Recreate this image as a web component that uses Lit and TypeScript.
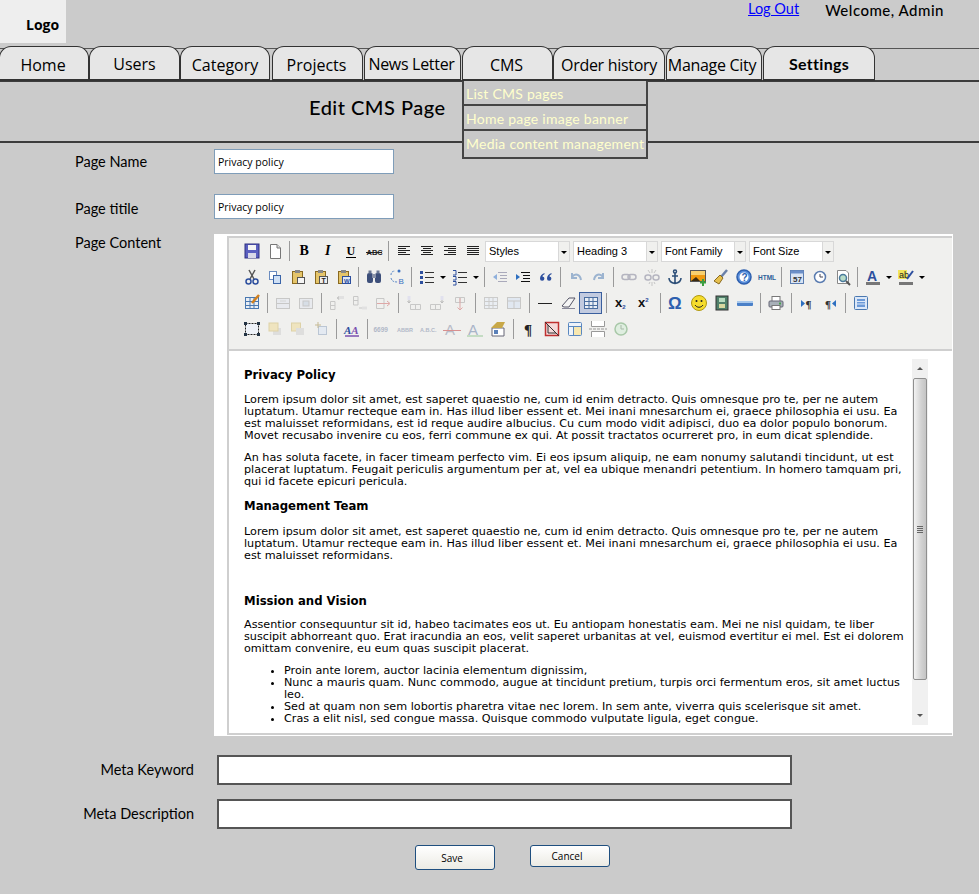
import { LitElement, html, css, svg, TemplateResult } from 'lit';
import { customElement } from 'lit/decorators.js';

const TABS = [
  { label: 'Home', width: 90, gap: 0, nudge: 2 },
  { label: 'Users', width: 91, gap: 0, raised: true },
  { label: 'Category', width: 90, gap: 2 },
  { label: 'Projects', width: 91, gap: 1, nudge: 2 },
  { label: 'News Letter', width: 97, gap: 1, raised: true, nudge: 2 },
  { label: 'CMS', width: 91, gap: 0, nudge: 2 },
  { label: 'Order history', width: 112, gap: 1 },
  { label: 'Manage City', width: 96, gap: 1, nudge: 4 },
  { label: 'Settings', width: 112, gap: 0 },
];

const CMS_MENU = ['List CMS pages', 'Home page image banner', 'Media content management'];

const t = (x: number, s: string, size = 10, fill = '#222', extra = '') =>
  svg`<text x=${x} y="14" font-size=${size} fill=${fill} font-family="Liberation Sans, sans-serif" style=${extra}>${s}</text>`;

const lines = (c: string, rows: number[][]) =>
  rows.map(([x1, y, x2]) => svg`<path d="M${x1} ${y}H${x2}" stroke=${c} />`);

const tableGrid = (c: string) => svg`<rect x="3.5" y="4.5" width="13" height="11" fill="#e8eef5" stroke=${c} /><path d="M3 8.5H17M3 12.5H17M8 5V15M12 5V15" stroke=${c} />`;
const clip = svg`<rect x="4.5" y="4.5" width="10" height="12" fill="#e5c56a" stroke="#8a6a20" /><rect x="7" y="3" width="5" height="3" fill="#888" />`;

// toolbar glyphs, all on a 20x20 box
const ICONS: Record<string, TemplateResult> = {
  save: svg`<rect x="3" y="3" width="14" height="14" fill="#5a5fc0" stroke="#2e3180" /><rect x="6" y="4" width="8" height="5" fill="#f4f4f4" /><rect x="6" y="12" width="8" height="5" fill="#d8d8e8" />`,
  doc: svg`<path d="M5.5 3.5H12L15.5 7V17.5H5.5Z" fill="#fff" stroke="#777" /><path d="M12 3.5V7H15.5" fill="#ddd" stroke="#777" />`,
  bold: t(4.5, 'B', 14, '#000', 'font-weight:700;font-family:Liberation Serif,serif'),
  italic: t(7, 'I', 14, '#000', 'font-weight:700;font-style:italic;font-family:Liberation Serif,serif'),
  underline: svg`${t(5.5, 'U', 12, '#000', 'font-weight:700;font-family:Liberation Serif,serif')}<path d="M5 16.5H15" stroke="#000" />`,
  strike: svg`${t(2.5, 'ABC', 7.5, '#222', 'font-weight:700')}<path d="M2 11.5H18" stroke="#222" />`,
  left: svg`${lines('#222', [[4, 5.5, 16], [4, 7.5, 12], [4, 9.5, 16], [4, 11.5, 12], [4, 13.5, 16]])}`,
  center: svg`${lines('#222', [[4, 5.5, 16], [6, 7.5, 14], [4, 9.5, 16], [6, 11.5, 14], [4, 13.5, 16]])}`,
  right: svg`${lines('#222', [[4, 5.5, 16], [8, 7.5, 16], [4, 9.5, 16], [8, 11.5, 16], [4, 13.5, 16]])}`,
  justify: svg`${lines('#222', [[4, 5.5, 16], [4, 7.5, 16], [4, 9.5, 16], [4, 11.5, 16], [4, 13.5, 16]])}`,
  cut: svg`<path d="M7 3L12 12M13 3L8 12" stroke="#555" stroke-width="1.5" /><circle cx="6.5" cy="14.5" r="2.5" fill="none" stroke="#2d4f9e" stroke-width="1.5" /><circle cx="13.5" cy="14.5" r="2.5" fill="none" stroke="#2d4f9e" stroke-width="1.5" />`,
  copy: svg`<rect x="4.5" y="4.5" width="7" height="8" fill="#fff" stroke="#6a8cc0" /><rect x="8.5" y="8.5" width="7" height="8" fill="#cfe0f5" stroke="#3a64a8" />`,
  paste: svg`${clip}<rect x="9.5" y="10.5" width="7" height="6" fill="#f5f5f5" stroke="#555" />`,
  pasteText: svg`${clip}<rect x="8.5" y="9.5" width="8" height="7" fill="#eee" stroke="#555" /><text x="10.5" y="15.5" font-size="7" font-weight="700" fill="#222" font-family="Liberation Sans, sans-serif">T</text>`,
  pasteWord: svg`${clip}<rect x="8.5" y="9.5" width="8" height="7" fill="#dfe8f5" stroke="#2d4f9e" /><text x="10" y="15.5" font-size="6" font-weight="700" fill="#2d4f9e" font-family="Liberation Sans, sans-serif">W</text>`,
  find: svg`<rect x="3" y="6" width="6" height="10" rx="2" fill="#3d4f7a" /><rect x="11" y="6" width="6" height="10" rx="2" fill="#3d4f7a" /><rect x="8" y="7" width="4" height="4" fill="#8a93a8" /><rect x="4.5" y="3.5" width="3" height="3" fill="#6b7894" /><rect x="12.5" y="3.5" width="3" height="3" fill="#6b7894" />`,
  replace: svg`<path d="M4 8C4 5 6 4 8 4M4 11C5 15 8 15 11 15" fill="none" stroke="#5a88c8" stroke-dasharray="2 1" /><text x="11.5" y="17" font-size="8" fill="#3a70c0" font-family="Liberation Sans, sans-serif">B</text><circle cx="12" cy="4" r="1.5" fill="#3a70c0" />`,
  bullist: svg`<rect x="3" y="4" width="3" height="3" fill="#2d4f9e" /><rect x="3" y="9" width="3" height="3" fill="#2d4f9e" /><rect x="3" y="14" width="3" height="3" fill="#2d4f9e" /><path d="M8 5.5H17M8 10.5H17M8 15.5H17" stroke="#333" />`,
  numlist: svg`<path d="M3 3.5H6V8H3M3 9.5H6V13H3M3 14.5H6V18H3" fill="none" stroke="#2d4f9e" /><path d="M8 5.5H17M8 10.5H17M8 15.5H17" stroke="#333" />`,
  outdent: svg`<path d="M8 5.5H17M10 8.5H17M10 11.5H17M8 14.5H17" stroke="#aab" /><path d="M3 10L7 7V13Z" fill="#8fb0dc" />`,
  indent: svg`<path d="M8 5.5H17M10 8.5H17M10 11.5H17M8 14.5H17" stroke="#111" /><path d="M7 10L3 7V13Z" fill="#2d6fc0" />`,
  quote: svg`<path d="M8.5 6C5.5 7 4 9 4 11.5A2.2 2.2 0 1 0 6.5 9.4C6.5 8.4 7.2 7.7 8.5 7.2ZM15.5 6C12.5 7 11 9 11 11.5A2.2 2.2 0 1 0 13.5 9.4C13.5 8.4 14.2 7.7 15.5 7.2Z" fill="#2d4f9e" />`,
  undo: svg`<path d="M6 6V11H11M6 10C9 6 14 7 15 13" fill="none" stroke="#9cb4d0" stroke-width="2" />`,
  redo: svg`<path d="M14 6V11H9M14 10C11 6 6 7 5 13" fill="none" stroke="#9cb4d0" stroke-width="2" />`,
  link: svg`<rect x="3" y="7.5" width="8" height="5" rx="2.5" fill="none" stroke="#b5b5c0" stroke-width="1.5" /><rect x="9" y="7.5" width="8" height="5" rx="2.5" fill="none" stroke="#b5b5c0" stroke-width="1.5" />`,
  unlink: svg`<rect x="3" y="8" width="6" height="5" rx="2.5" fill="none" stroke="#b5b5c0" stroke-width="1.5" /><rect x="11" y="8" width="6" height="5" rx="2.5" fill="none" stroke="#b5b5c0" stroke-width="1.5" /><path d="M10 2V6M6 3L8 6M14 3L12 6M10 15V19M7 17L8 15M13 17L12 15" stroke="#c5c5c5" />`,
  anchor: svg`<circle cx="10" cy="4.5" r="1.5" fill="none" stroke="#2d4f78" stroke-width="1.5" /><path d="M10 6V16M7 9H13M4 11C4 15 7 16 10 16.5C13 16 16 15 16 11" fill="none" stroke="#2d4f78" stroke-width="1.6" />`,
  image: svg`<rect x="2.5" y="3.5" width="15" height="11" fill="#f09a10" stroke="#555" /><rect x="3" y="4" width="14" height="4" fill="#f7d070" /><path d="M3 14L8 10L12 14Z" fill="#3a2a10" /><path d="M15 12V19M12 15.5H18" stroke="#3ca040" stroke-width="2" />`,
  cleanup: svg`<path d="M16 3L10 10" stroke="#6a80a8" stroke-width="2.5" /><path d="M9 8L12 11L8 17L3 14Z" fill="#e6c04e" stroke="#8a6a20" />`,
  help: svg`<circle cx="10" cy="10" r="7" fill="#5a8fdc" stroke="#2d5fae" stroke-width="1.5" /><circle cx="10" cy="10" r="4.5" fill="#fff" /><text x="7.5" y="13.5" font-size="10" font-weight="700" fill="#2d5fae" font-family="Liberation Sans, sans-serif">?</text>`,
  htmlSrc: svg`<text x="1" y="12.5" font-size="6.5" font-weight="700" fill="#2d6098" font-family="Liberation Sans, sans-serif">HTML</text>`,
  date: svg`<rect x="3.5" y="3.5" width="13" height="13" fill="#d9e4f4" stroke="#5a7cb0" /><rect x="3.5" y="3.5" width="13" height="3" fill="#6c8fc8" /><text x="6" y="15" font-size="8" font-weight="700" fill="#333" font-family="Liberation Sans, sans-serif">57</text>`,
  time: svg`<circle cx="10" cy="10" r="5.5" fill="#fff" stroke="#5a7cb0" stroke-width="1.5" /><path d="M10 7V10H13" fill="none" stroke="#445" />`,
  preview: svg`<path d="M4.5 3.5H13L15.5 6V16.5H4.5Z" fill="#fff" stroke="#888" /><circle cx="10" cy="11" r="3.5" fill="#b8dcc8" stroke="#4a7a9c" stroke-width="1.5" /><path d="M13 14L17 18" stroke="#555" stroke-width="2" />`,
  fore: svg`${t(4, 'A', 14, '#2d4f9e', 'font-weight:700')}<rect x="3" y="15" width="14" height="3" fill="#777" />`,
  back: svg`<rect x="2" y="3" width="9" height="9" fill="#f2e55c" /><text x="3" y="11" font-size="9" fill="#222" font-family="Liberation Sans, sans-serif">ab</text><path d="M17 4L11 12" stroke="#2d4f9e" stroke-width="2" /><rect x="3" y="15" width="14" height="3" fill="#777" />`,
  tableEdit: svg`${tableGrid('#4a78b0')}<path d="M17 2L10 10" stroke="#d2801e" stroke-width="2.5" />`,
  row: svg`<rect x="3.5" y="5.5" width="13" height="10" fill="#e6e9ee" stroke="#bbb" /><path d="M3 10.5H17" stroke="#bbb" /><path d="M7 8H13" stroke="#ccc" />`,
  cell: svg`<rect x="3.5" y="5.5" width="13" height="10" fill="#e6e9ee" stroke="#bbb" /><rect x="7" y="8" width="6" height="5" fill="#cfd8e4" stroke="#bbb" />`,
  rowBefore: svg`<path d="M3.5 8.5H8V16.5H3.5ZM3.5 12.5H8" fill="none" stroke="#bbb" /><path d="M10 5H17M10 5L12 3.5V6.5Z" stroke="#bbb" fill="#bbb" /><rect x="12" y="3" width="5" height="3" fill="#ddd" />`,
  rowAfter: svg`<path d="M3.5 3.5H8V12H3.5ZM3.5 7.5H8" fill="none" stroke="#bbb" /><path d="M9 15H17" stroke="#bbb" /><rect x="12" y="13.5" width="5" height="3" fill="#ddd" />`,
  rowDel: svg`<path d="M3.5 5.5H11V15.5H3.5ZM3.5 10.5H11" fill="none" stroke="#bbb" /><path d="M4 10.5H16M14 8L17 10.5L14 13" fill="none" stroke="#d89090" />`,
  colBefore: svg`<path d="M6.5 11.5H16.5V16.5H6.5ZM11.5 11.5V16.5" fill="none" stroke="#bbb" /><path d="M5 3V10M3.5 8L5 10L6.5 8" fill="none" stroke="#aaa" /><rect x="3.5" y="3" width="3" height="4" fill="#dde" />`,
  colAfter: svg`<path d="M3.5 11.5H13.5V16.5H3.5ZM8.5 11.5V16.5" fill="none" stroke="#bbb" /><path d="M15 3V10M13.5 8L15 10L16.5 8" fill="none" stroke="#aaa" /><rect x="13.5" y="3" width="3" height="4" fill="#dde" />`,
  colDel: svg`<path d="M5.5 4.5H14.5V9.5H5.5ZM10 4.5V9.5" fill="none" stroke="#bbb" /><path d="M10 5V17M7.5 14.5L10 17L12.5 14.5" fill="none" stroke="#d89090" />`,
  merge: svg`${tableGrid('#c0c0c0')}`,
  split: svg`<rect x="3.5" y="4.5" width="13" height="11" fill="#dde6f2" stroke="#bbb" /><path d="M3 8H17M10 8V15" stroke="#bbb" />`,
  hr: svg`<path d="M3 10.5H17" stroke="#222" />`,
  eraser: svg`<path d="M4 13L11 5H17L11 14H6Z" fill="#f5f5f5" stroke="#556" /><path d="M4 15.5H17" stroke="#889" />`,
  table: svg`${tableGrid('#4a6ea0')}`,
  sub: svg`<text x="3" y="14" font-size="13" font-weight="700" fill="#111" font-family="Liberation Sans, sans-serif">x<tspan font-size="6" dy="2" fill="#2d4f9e">2</tspan></text>`,
  sup: svg`<text x="3" y="14" font-size="13" font-weight="700" fill="#111" font-family="Liberation Sans, sans-serif">x<tspan font-size="6" dy="-5" fill="#2d4f9e">2</tspan></text>`,
  omega: svg`<text x="2" y="16" font-size="17" font-weight="700" fill="#2d5fae" font-family="Liberation Sans, sans-serif">Ω</text>`,
  smile: svg`<circle cx="10" cy="10" r="7.5" fill="#f5dc2c" stroke="#b09810" /><circle cx="7.5" cy="8" r="1" fill="#222" /><circle cx="12.5" cy="8" r="1" fill="#222" /><path d="M6 12C8 15 12 15 14 12" fill="none" stroke="#222" />`,
  media: svg`<rect x="4" y="3" width="12" height="14" fill="#50806a" stroke="#333" /><rect x="7" y="5" width="6" height="4" fill="#b8dcc0" /><rect x="7" y="11" width="6" height="4" fill="#d8d8a0" />`,
  bar: svg`<rect x="2" y="8" width="16" height="5" rx="1" fill="#4a80c8" /><rect x="2" y="8" width="16" height="2" fill="#a8c8ec" />`,
  print: svg`<rect x="6" y="3.5" width="8" height="5" fill="#fff" stroke="#777" /><rect x="3" y="8" width="14" height="6" rx="1" fill="#a8b0b8" stroke="#667" /><rect x="6" y="12.5" width="8" height="4" fill="#fff" stroke="#777" /><rect x="13" y="9.5" width="2" height="2" fill="#4aa050" />`,
  ltr: svg`<path d="M4 7V14L8 10.5Z" fill="#2d6fc0" /><text x="8.5" y="14.5" font-size="11" font-weight="700" fill="#333" font-family="Liberation Serif, serif">¶</text>`,
  rtl: svg`<path d="M16 7V14L12 10.5Z" fill="#2d6fc0" /><text x="5" y="14.5" font-size="11" font-weight="700" fill="#333" font-family="Liberation Serif, serif">¶</text>`,
  full: svg`<rect x="3.5" y="3.5" width="13" height="13" rx="1" fill="#dce8f8" stroke="#4a78b0" /><rect x="6" y="6" width="8" height="8" fill="#6c9ad8" /><path d="M6 8.5H14M6 11H14" stroke="#dce8f8" />`,
  layer: svg`<rect x="3.5" y="4.5" width="13" height="11" fill="#eef2f8" stroke="#222" stroke-dasharray="2 1" /><rect x="2" y="3" width="3" height="3" fill="#234" /><rect x="15" y="3" width="3" height="3" fill="#234" /><rect x="2" y="14" width="3" height="3" fill="#234" /><rect x="15" y="14" width="3" height="3" fill="#234" />`,
  forward: svg`<rect x="8" y="9" width="8" height="7" fill="#d8d8d8" /><rect x="4" y="4" width="9" height="8" fill="#efe0b0" stroke="#d8c890" />`,
  backward: svg`<rect x="3.5" y="4" width="9" height="8" fill="#efe0b0" stroke="#d8c890" /><rect x="8" y="9" width="8" height="7" fill="#d8d8d8" />`,
  absolute: svg`<rect x="7.5" y="7.5" width="8" height="8" fill="#e0e8f4" stroke="#aab8cc" /><path d="M7 3V9M4 6H10" stroke="#b8a878" />`,
  styleProps: svg`<text x="2" y="15" font-size="11" font-style="italic" font-weight="700" font-family="Liberation Serif, serif"><tspan fill="#2d4f9e">A</tspan><tspan fill="#7a4fae">A</tspan></text><path d="M3 17H17" stroke="#7a4fae" stroke-width="1.5" />`,
  cite: svg`<text x="0.5" y="12.5" font-size="6.5" font-weight="700" fill="#b0b8c8" font-family="Liberation Sans, sans-serif">6699</text>`,
  abbr: svg`<text x="1" y="12.5" font-size="5.5" font-weight="700" fill="#b0b8c8" font-family="Liberation Sans, sans-serif">ABBR</text>`,
  acronym: svg`<text x="1" y="12.5" font-size="5.5" font-weight="700" fill="#b0b8c8" font-family="Liberation Sans, sans-serif">A.B.C.</text>`,
  del: svg`<text x="3" y="16" font-size="15" fill="#b8bcc8" font-family="Liberation Sans, sans-serif">A</text><path d="M1 11.5H19" stroke="#d89090" />`,
  ins: svg`<text x="3" y="16" font-size="15" fill="#a8b4c8" font-family="Liberation Sans, sans-serif">A</text><path d="M2 17H18" stroke="#98c898" />`,
  attribs: svg`<path d="M4 9H16V17H4Z" fill="#fff" stroke="#667" /><rect x="6" y="11" width="4" height="4" fill="#5a80b8" /><path d="M3 9L9 3H17L14 9Z" fill="#c8a848" />`,
  para: svg`<text x="5" y="15.5" font-size="15" font-weight="700" fill="#222" font-family="Liberation Serif, serif">¶</text>`,
  nonbreak: svg`<rect x="3.5" y="3.5" width="13" height="13" fill="#f5dada" stroke="#c03030" stroke-width="1.5" /><path d="M6 6V14H14M3 3L17 17" fill="none" stroke="#333" />`,
  template: svg`<rect x="3.5" y="3.5" width="13" height="13" rx="1" fill="#eef3fa" stroke="#5a88c0" /><path d="M4 7.5H16M8.5 8V16" stroke="#5a88c0" /><rect x="9" y="8" width="7" height="8" fill="#f7e7b0" />`,
  pagebreak: svg`<path d="M3.5 2V7.5H16.5V2M3.5 18V12.5H16.5V18" fill="#fff" stroke="#999" /><path d="M1 10H19" stroke="#999" stroke-dasharray="3 1" />`,
  restore: svg`<circle cx="10" cy="10" r="6" fill="#dfeee0" stroke="#a8c8a8" stroke-width="1.5" /><path d="M10 6V10H13" fill="none" stroke="#a8b8a8" />`,
};

const DIMMED = new Set(['row', 'cell', 'rowBefore', 'rowAfter', 'rowDel', 'colBefore', 'colAfter', 'colDel', 'merge', 'split', 'forward', 'backward', 'absolute']);

// '|' separator, '>' dropdown arrow, '[..]' select box, anything else an icon name
const TOOLBAR: { items: string[]; wide?: boolean }[] = [
  { items: ['save', 'doc', '|', 'bold', 'italic', 'underline', 'strike', '|', 'left', 'center', 'right', 'justify', '[Styles]', '[Heading 3]', '[Font Family]', '[Font Size]'] },
  { items: ['cut', 'copy', 'paste', 'pasteText', 'pasteWord', '|', 'find', 'replace', '|', 'bullist', '>', 'numlist', '>', '|', 'outdent', 'indent', 'quote', '|', 'undo', 'redo', '|', 'link', 'unlink', 'anchor', 'image', 'cleanup', 'help', 'htmlSrc', '|', 'date', 'time', 'preview', '|', 'fore', '>', 'back', '>'] },
  { wide: true, items: ['tableEdit', '|', 'row', 'cell', '|', 'rowBefore', 'rowAfter', 'rowDel', '|', 'colBefore', 'colAfter', 'colDel', '|', 'merge', 'split', '|', 'hr', 'eraser', 'table', '|', 'sub', 'sup', '|', 'omega', 'smile', 'media', 'bar', '|', 'print', '|', 'ltr', 'rtl', '|', 'full'] },
  { wide: true, items: ['layer', 'forward', 'backward', 'absolute', '|', 'styleProps', '|', 'cite', 'abbr', 'acronym', 'del', 'ins', 'attribs', '|', 'para', 'nonbreak', 'template', 'pagebreak', 'restore'] },
];

@customElement('app-root')
export class AppRoot extends LitElement {
  static styles = css`
    :host {
      display: block;
      min-height: 894px;
      background: #cbcbcb;
      font-family: 'Open Sans', sans-serif;
      color: #000;
      overflow: hidden;
    }

    .top {
      display: flex;
      height: 46px;
    }
    .logo {
      width: 66px;
      height: 43px;
      background: #eeeeee;
      box-sizing: border-box;
      padding: 15px 0 0 26px;
      font: bold 14px 'Open Sans', sans-serif;
      line-height: 19px;
    }
    .logout {
      margin: 0 0 0 682px;
      font: 14.5px/17px 'Lato', sans-serif;
      color: #0000ff;
      text-decoration: underline;
    }
    .welcome {
      margin-left: 26px;
      padding-top: 1px;
      font: 15px/19px 'Lato', sans-serif;
      font-weight: 500;
      letter-spacing: 0.5px;
    }

    nav {
      display: flex;
      height: 36px;
      box-sizing: border-box;
      border-bottom: 2px solid #3c3c3c;
      margin-left: -1px;
      position: relative;
    }
    nav::before {
      content: '';
      position: absolute;
      left: 0;
      right: 0;
      top: 2px;
      border-top: 1px solid #555;
    }
    .tab {
      position: relative;
      box-sizing: border-box;
      height: 35px;
      background: #e6e6e6;
      border: 1px solid #333;
      border-bottom: 2px solid #333;
      border-radius: 12px 12px 0 0;
      text-align: center;
      font: 16px/37px 'Open Sans', sans-serif;
      white-space: nowrap;
    }
    .tab.raised { line-height: 34px; }
    .tab.tight { letter-spacing: -0.3px; }
    .tab.settings {
      font-family: 'Lato', sans-serif;
      font-weight: 700;
      line-height: 34px;
      letter-spacing: 0.3px;
    }
    .menu {
      position: absolute;
      top: 34px;
      left: -1px;
      width: 186px;
      z-index: 2;
      background: #c8c8c8;
      border: 2px solid #444;
      border-top: none;
      box-sizing: border-box;
    }
    .menu div {
      height: 25px;
      box-sizing: border-box;
      border-bottom: 2px solid #444;
      padding-left: 2px;
      font: 14px/25px 'Lato', sans-serif;
      letter-spacing: 0.25px;
      color: #ffffcc;
      text-align: left;
    }
    .menu div:last-child {
      height: 26px;
      border-bottom: none;
    }

    .title {
      height: 61px;
      box-sizing: border-box;
      border-bottom: 2px solid #3c3c3c;
      padding: 12px 0 0 309px;
      font: 20px/27px 'Lato', sans-serif;
      font-weight: 500;
      letter-spacing: 0.5px;
    }

    form {
      display: block;
      padding-top: 6px;
    }
    .row {
      display: grid;
      grid-template-columns: 214px 180px;
      height: 25px;
      margin-bottom: 20px;
    }
    .row.last { margin-bottom: 15px; }
    .row label, .content-label {
      padding-left: 75px;
      font: 14.5px/26px 'Lato', sans-serif;
    }
    .row.last label { line-height: 30px; }
    .row input {
      box-sizing: border-box;
      width: 180px;
      height: 25px;
      padding: 0 3px;
      border: 1px solid #7f9db9;
      background: #fff;
      font: 10.5px 'Open Sans', sans-serif;
      color: #000;
      outline: none;
    }
    .content-row {
      display: grid;
      grid-template-columns: 214px 739px;
    }
    .content-label { line-height: 18px; }

    .editor {
      height: 502px;
      box-sizing: border-box;
      background: #fff;
      padding: 2px 1px 1px 13px;
    }
    .editor-box {
      height: 100%;
      box-sizing: border-box;
      display: flex;
      flex-direction: column;
      border-top: 2px solid #cfcfcf;
      border-left: 2px solid #cfcfcf;
      border-bottom: 2px solid #cfcfcf;
    }
    .toolbar {
      flex: none;
      height: 113px;
      box-sizing: border-box;
      background: #f0f0ee;
      border-bottom: 2px solid #cfcfcf;
      padding: 0 0 0 11px;
    }
    .tb-row {
      display: flex;
      align-items: center;
      height: 26px;
    }
    .btn {
      flex: none;
      width: 23px;
      height: 22px;
      box-sizing: border-box;
      display: flex;
      align-items: center;
      justify-content: center;
    }
    .btn.active {
      background: #c2cbe0;
      border: 1px solid #3a5f9e;
    }
    .btn.dim svg { opacity: 0.75; }
    .sep {
      flex: none;
      width: 7px;
      height: 20px;
      display: flex;
      justify-content: center;
    }
    .wide .sep { width: 8px; }
    .sep::after {
      content: '';
      width: 1px;
      background: #9a9a9a;
    }
    .arrow {
      flex: none;
      width: 10px;
      display: flex;
      justify-content: flex-start;
    }
    .arrow::after {
      content: '';
      margin-left: 2px;
      border-top: 3px solid #000;
      border-left: 3px solid transparent;
      border-right: 3px solid transparent;
    }
    .select {
      flex: none;
      display: flex;
      width: 85px;
      height: 21px;
      margin: 0 2px 0 1px;
      box-sizing: border-box;
      background: #fff;
      border: 1px solid #d8d8d8;
      padding-left: 3px;
      position: relative;
      font: 11px/19px 'Liberation Sans', sans-serif;
      color: #000;
    }
    .select::after {
      content: '';
      position: absolute;
      right: 0;
      top: 0;
      bottom: 0;
      width: 10px;
      background: #f0f0ee;
      border-left: 1px solid #d8d8d8;
    }
    .select span {
      position: absolute;
      right: 2px;
      top: 9px;
      z-index: 1;
      border-top: 3px solid #000;
      border-left: 3px solid transparent;
      border-right: 3px solid transparent;
    }

    .doc-area {
      flex: 1;
      min-height: 0;
      display: flex;
    }
    .doc {
      width: 683px;
      box-sizing: border-box;
      padding: 16px 0 0 15px;
      font: 11.2px/12px 'DejaVu Sans', sans-serif;
      color: #000;
      white-space: nowrap;
    }
    .doc h3 {
      margin: 0;
      font: bold 11.7px/16px 'DejaVu Sans', sans-serif;
    }
    .doc p { margin: 10px 0; }
    .doc h3 + p { margin-top: 11px; }
    .doc .h-team + p { margin-top: 12px; }
    .doc .h-mission + p { margin-top: 10px; }
    .doc ul {
      margin: 10px 0 0;
      padding-left: 40px;
    }
    .h-team { margin-top: 10px !important; }
    .h-mission { margin-top: 31px !important; }

    .scroll {
      flex: none;
      width: 16px;
      height: 366px;
      margin-top: 8px;
      background: #f0f0f0;
      display: flex;
      flex-direction: column;
      align-items: center;
    }
    .up, .down {
      flex: none;
      width: 0;
      height: 0;
      margin: 8px 0;
      border-left: 3px solid transparent;
      border-right: 3px solid transparent;
    }
    .up { border-bottom: 3px solid #555; }
    .down { border-top: 3px solid #555; margin-top: auto; }
    .thumb {
      width: 14px;
      height: 302px;
      box-sizing: border-box;
      border: 1px solid #8f8f8f;
      border-radius: 2px;
      background: linear-gradient(to right, #f2f2f2, #d2d2d2 60%, #c4c4c4);
      display: flex;
      align-items: center;
      justify-content: center;
    }
    .thumb::after {
      content: '';
      width: 6px;
      height: 7px;
      background: repeating-linear-gradient(#666 0 1px, transparent 1px 2px);
    }

    .meta {
      display: grid;
      grid-template-columns: 194px 575px;
      column-gap: 23px;
      row-gap: 14px;
      margin-top: 19px;
    }
    .meta label {
      text-align: right;
      font: 14.5px/30px 'Lato', sans-serif;
    }
    .meta input {
      box-sizing: border-box;
      height: 30px;
      border: 2px solid #555;
      background: #fff;
      outline: none;
    }
    .actions {
      display: flex;
      align-items: flex-start;
      gap: 35px;
      margin: 16px 0 0 415px;
    }
    .actions button {
      width: 80px;
      height: 25px;
      box-sizing: border-box;
      padding: 0 6px 0 0;
      border: 1px solid #1f4f7f;
      border-radius: 3px;
      background: linear-gradient(#ffffff, #ecebe4);
      font: 10px 'Open Sans', sans-serif;
      color: #000;
    }
    .actions button.cancel { height: 22px; }
  `;

  renderToolbarItem(item: string) {
    if (item === '|') return html`<span class="sep"></span>`;
    if (item === '>') return html`<span class="arrow"></span>`;
    if (item.startsWith('[')) {
      return html`<span class="select">${item.slice(1, -1)}<span></span></span>`;
    }
    const cls = `btn${item === 'table' ? ' active' : ''}${DIMMED.has(item) ? ' dim' : ''}`;
    return html`<span class=${cls}><svg width="20" height="20" viewBox="0 0 20 20">${ICONS[item]}</svg></span>`;
  }

  renderDocument() {
    return html`
      <div class="doc">
        <h3>Privacy Policy</h3>
        <p>Lorem ipsum dolor sit amet, est saperet quaestio ne, cum id enim detracto. Quis omnesque pro te, per ne autem<br />
        luptatum. Utamur recteque eam in. Has illud liber essent et. Mei inani mnesarchum ei, graece philosophia ei usu. Ea<br />
        est maluisset reformidans, est id reque audire albucius. Cu cum modo vidit adipisci, duo ea dolor populo bonorum.<br />
        Movet recusabo invenire cu eos, ferri commune ex qui. At possit tractatos ocurreret pro, in eum dicat splendide.</p>
        <p>An has soluta facete, in facer timeam perfecto vim. Ei eos ipsum aliquip, ne eam nonumy salutandi tincidunt, ut est<br />
        placerat luptatum. Feugait periculis argumentum per at, vel ea ubique menandri petentium. In homero tamquam pri,<br />
        qui id facete epicuri pericula.</p>
        <h3 class="h-team">Management Team</h3>
        <p>Lorem ipsum dolor sit amet, est saperet quaestio ne, cum id enim detracto. Quis omnesque pro te, per ne autem<br />
        luptatum. Utamur recteque eam in. Has illud liber essent et. Mei inani mnesarchum ei, graece philosophia ei usu. Ea<br />
        est maluisset reformidans.</p>
        <h3 class="h-mission">Mission and Vision</h3>
        <p>Assentior consequuntur sit id, habeo tacimates eos ut. Eu antiopam honestatis eam. Mei ne nisl quidam, te liber<br />
        suscipit abhorreant quo. Erat iracundia an eos, velit saperet urbanitas at vel, euismod evertitur ei mel. Est ei dolorem<br />
        omittam convenire, eu eum quas suscipit placerat.</p>
        <ul>
          <li>Proin ante lorem, auctor lacinia elementum dignissim,</li>
          <li>Nunc a mauris quam. Nunc commodo, augue at tincidunt pretium, turpis orci fermentum eros, sit amet luctus<br />leo.</li>
          <li>Sed at quam non sem lobortis pharetra vitae nec lorem. In sem ante, viverra quis scelerisque sit amet.</li>
          <li>Cras a elit nisl, sed congue massa. Quisque commodo vulputate ligula, eget congue.</li>
        </ul>
      </div>
    `;
  }

  render() {
    return html`
      <div class="top">
        <div class="logo">Logo</div>
        <a class="logout">Log Out</a>
        <div class="welcome">Welcome, Admin</div>
      </div>

      <nav>
        ${TABS.map(tab => html`
          <div class="tab ${tab.label === 'Settings' ? 'settings' : ''} ${tab.raised ? 'raised' : ''} ${tab.label.length > 8 ? 'tight' : ''}"
               style="width: ${tab.width}px; margin-right: ${tab.gap}px; padding-right: ${tab.nudge ?? 0}px">
            ${tab.label}
            ${tab.label === 'CMS' ? html`<div class="menu">${CMS_MENU.map(m => html`<div>${m}</div>`)}</div>` : ''}
          </div>
        `)}
      </nav>

      <div class="title">Edit CMS Page</div>

      <form>
        <div class="row">
          <label>Page Name</label>
          <input value="Privacy policy" />
        </div>
        <div class="row last">
          <label>Page titile</label>
          <input value="Privacy policy" />
        </div>
        <div class="content-row">
          <div class="content-label">Page Content</div>
          <div class="editor">
            <div class="editor-box">
              <div class="toolbar">
                ${TOOLBAR.map(row => html`
                  <div class="tb-row ${row.wide ? 'wide' : ''}">${row.items.map(i => this.renderToolbarItem(i))}</div>
                `)}
              </div>
              <div class="doc-area">
                ${this.renderDocument()}
                <div class="scroll">
                  <span class="up"></span>
                  <div class="thumb"></div>
                  <span class="down"></span>
                </div>
              </div>
            </div>
          </div>
        </div>

        <div class="meta">
          <label>Meta Keyword</label>
          <input />
          <label>Meta Description</label>
          <input />
        </div>

        <div class="actions">
          <button type="button">Save</button>
          <button type="button" class="cancel">Cancel</button>
        </div>
      </form>
    `;
  }
}
